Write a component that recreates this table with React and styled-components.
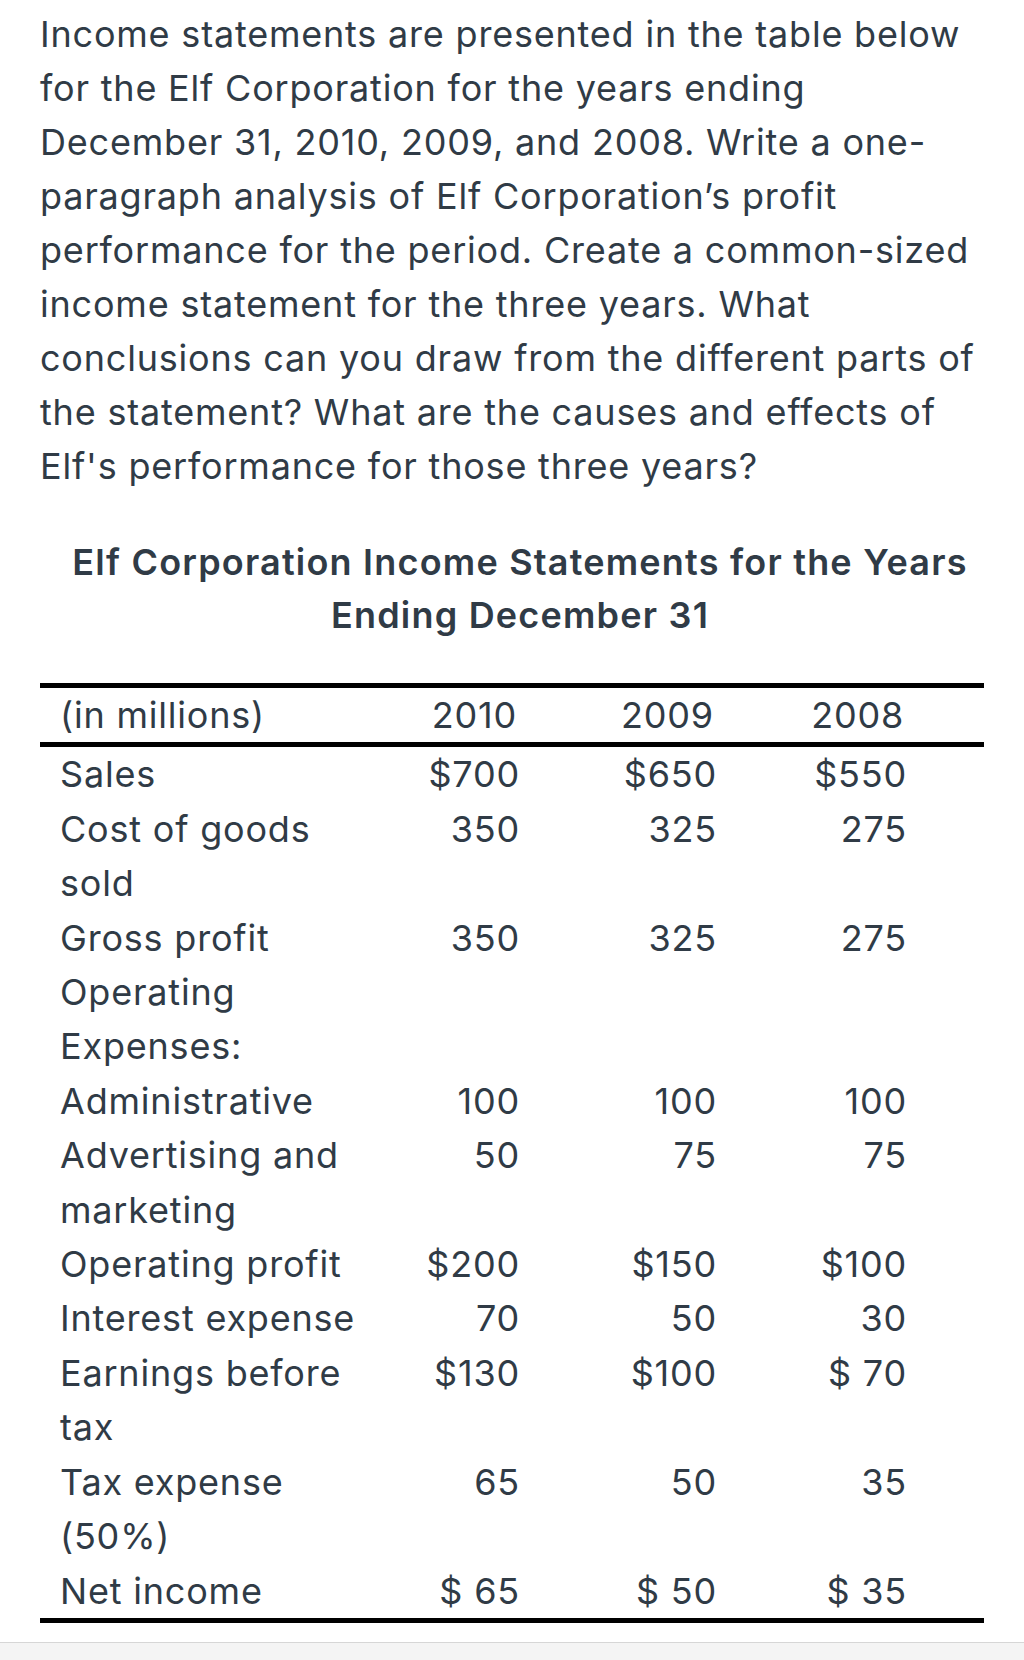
import React from "react";
import styled, { createGlobalStyle } from "styled-components";

const Global = createGlobalStyle`
  html, body { margin: 0; padding: 0; background: #ffffff; }
  body { font-family: Inter, "Noto Sans", "Liberation Sans", sans-serif; color: #303b46; }
  * { box-sizing: border-box; }
`;

const Page = styled.main`
  padding: 7px 40px 0 40px;
`;

const Question = styled.p`
  margin: 0;
  font-size: 36px;
  line-height: 54px;
  letter-spacing: 0.8px;
`;

const Title = styled.h2`
  margin: 43px 0 0 0;
  padding-left: 16px;
  font-size: 36px;
  line-height: 53px;
  font-weight: 600;
  text-align: center;
  letter-spacing: 1.2px;
`;

const Table = styled.div`
  margin-top: 41px;
  border-top: 5px solid #000;
  border-bottom: 5px solid #000;
  font-size: 36px;
  line-height: 54.4px;
  letter-spacing: 0.8px;
`;

const Row = styled.div`
  display: grid;
  grid-template-columns: 330px 150px 197px 190px;
  ${(p) => (p.$head ? "border-bottom: 5px solid #000;" : "")}
`;

const Label = styled.div`
  padding-left: 20px;
`;

const Value = styled.div`
  text-align: right;
  white-space: pre;
  padding-right: ${(p) => (p.$head ? "3px" : "0")};
`;

const Footer = styled.div`
  margin-top: 19px;
  height: 40px;
  border-top: 1px solid #d6d6d6;
  background: #f4f4f4;
`;

const rows = [
  ["Sales", "$700", "$650", "$550"],
  ["Cost of goods sold", "350", "325", "275"],
  ["Gross profit", "350", "325", "275"],
  ["Operating Expenses:", "", "", ""],
  ["Administrative", "100", "100", "100"],
  ["Advertising and marketing", "50", "75", "75"],
  ["Operating profit", "$200", "$150", "$100"],
  ["Interest expense", "70", "50", "30"],
  ["Earnings before tax", "$130", "$100", "$ 70"],
  ["Tax expense (50%)", "65", "50", "35"],
  ["Net income", "$ 65", "$ 50", "$ 35"],
];

export default function App() {
  return (
    <>
      <Global />
      <Page>
        <Question>
          Income statements are presented in the table below for the Elf
          Corporation for the years ending December 31, 2010, 2009, and 2008.
          Write a one-paragraph analysis of Elf Corporation’s profit
          performance for the period. Create a common-sized income statement
          for the three years. What conclusions can you draw from the
          different parts of the statement? What are the causes and effects of
          Elf's performance for those three years?
        </Question>
        <Title>Elf Corporation Income Statements for the Years Ending December 31</Title>
        <Table>
          <Row $head>
            <Label>(in millions)</Label>
            <Value $head>2010</Value>
            <Value $head>2009</Value>
            <Value $head>2008</Value>
          </Row>
          {rows.map((r) => (
            <Row key={r[0]}>
              <Label>{r[0]}</Label>
              <Value>{r[1]}</Value>
              <Value>{r[2]}</Value>
              <Value>{r[3]}</Value>
            </Row>
          ))}
        </Table>
      </Page>
      <Footer />
    </>
  );
}
